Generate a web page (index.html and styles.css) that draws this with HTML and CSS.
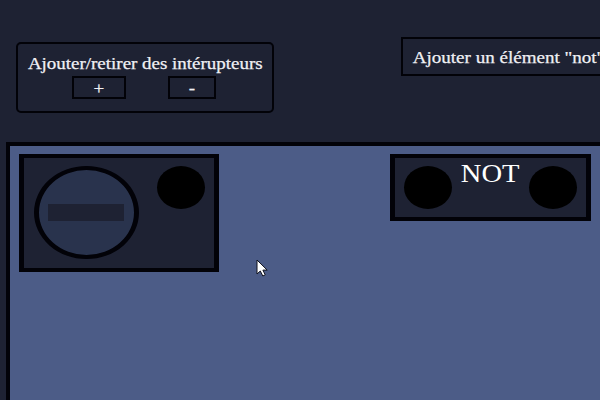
FILE: index.html
```html
<!DOCTYPE html>
<html lang="fr">
<head>
<meta charset="utf-8">
<title>Circuit</title>
<link rel="stylesheet" href="styles.css">
</head>
<body>
<header class="toolbar">
  <section class="panel">
    <div class="panel-title"><span class="wide title-text">Ajouter/retirer des intérupteurs</span></div>
    <div class="panel-buttons">
      <button class="btn plus"><span class="wide">+</span></button>
      <button class="btn minus"><span class="wide">-</span></button>
    </div>
  </section>
  <button class="btn add-not"><span class="wide">Ajouter un élément "not"</span></button>
</header>
<main class="board">
  <div class="component switch">
    <div class="knob"><div class="slot"></div></div>
    <div class="pin"></div>
  </div>
  <div class="component gate">
    <div class="pin"></div>
    <div class="gate-label"><span class="wide">NOT</span></div>
    <div class="pin"></div>
  </div>
</main>
<svg class="cursor" width="13" height="19" viewBox="0 0 13 19"><path d="M1 1V15L4.3 12L6.8 17L9.2 15.8L6.9 11.1H11.2Z" fill="#fff" stroke="#10131d" stroke-width="1"/></svg>
</body>
</html>
```
FILE: styles.css
```css
* { box-sizing: border-box; }

body {
  margin: 0;
  width: 600px;
  height: 400px;
  overflow: hidden;
  position: relative;
  background: #1e2233;
  color: #f0f0f4;
  font-family: "Liberation Serif", serif;
}

.wide {
  display: inline-block;
  white-space: nowrap;
  transform: scaleX(1.12);
}

.toolbar {
  display: flex;
  align-items: flex-start;
  height: 142px;
  padding: 37px 0 0 16px;
  -webkit-text-stroke: 0.25px currentColor;
}

.panel {
  flex: none;
  width: 258px;
  height: 71px;
  margin-top: 5px;
  border: 2px solid #020208;
  border-radius: 5px;
  padding-top: 10px;
}

.panel-title {
  display: flex;
  justify-content: center;
  height: 22px;
  font-size: 17px;
  line-height: 20px;
}

.title-text { transform: scaleX(1.115); }

.panel-buttons {
  display: flex;
  gap: 42px;
  padding-left: 54px;
}

.btn {
  flex: none;
  display: flex;
  align-items: center;
  justify-content: center;
  height: 23px;
  padding: 2px 0 0;
  border: 2px solid #020208;
  background: transparent;
  color: inherit;
  font: 17px "Liberation Serif", serif;
}

.plus { width: 54px; }
.minus { width: 48px; }

.add-not {
  width: 216px;
  height: 39px;
  margin-left: 127px;
}

.board {
  display: flex;
  align-items: flex-start;
  gap: 171px;
  width: 620px;
  height: 270px;
  margin-left: 6px;
  padding: 8px 9px;
  border: 4px solid #020208;
  background: #4c5c87;
}

.component {
  flex: none;
  display: flex;
  align-items: flex-start;
  justify-content: space-between;
  padding: 8px 9px;
  border: solid #020208;
  border-width: 4px 5px;
  background: #1e2233;
}

.switch { width: 200px; height: 118px; }
.gate { width: 201px; height: 67px; }

.knob {
  display: flex;
  align-items: center;
  justify-content: center;
  width: 105px;
  height: 93px;
  margin-left: 1px;
  border: solid #020208;
  border-width: 4px 5px;
  border-radius: 50%;
  background: #29334d;
}

.slot {
  width: 76px;
  height: 17px;
  margin-right: 1px;
  background: #1e2233;
}

.pin {
  width: 48px;
  height: 43px;
  border-radius: 50%;
  background: #000;
}

.gate-label {
  margin-top: -7px;
  font-size: 25.5px;
  line-height: 30px;
  color: #fff;
}

.cursor {
  position: absolute;
  left: 256px;
  top: 259px;
}
```
